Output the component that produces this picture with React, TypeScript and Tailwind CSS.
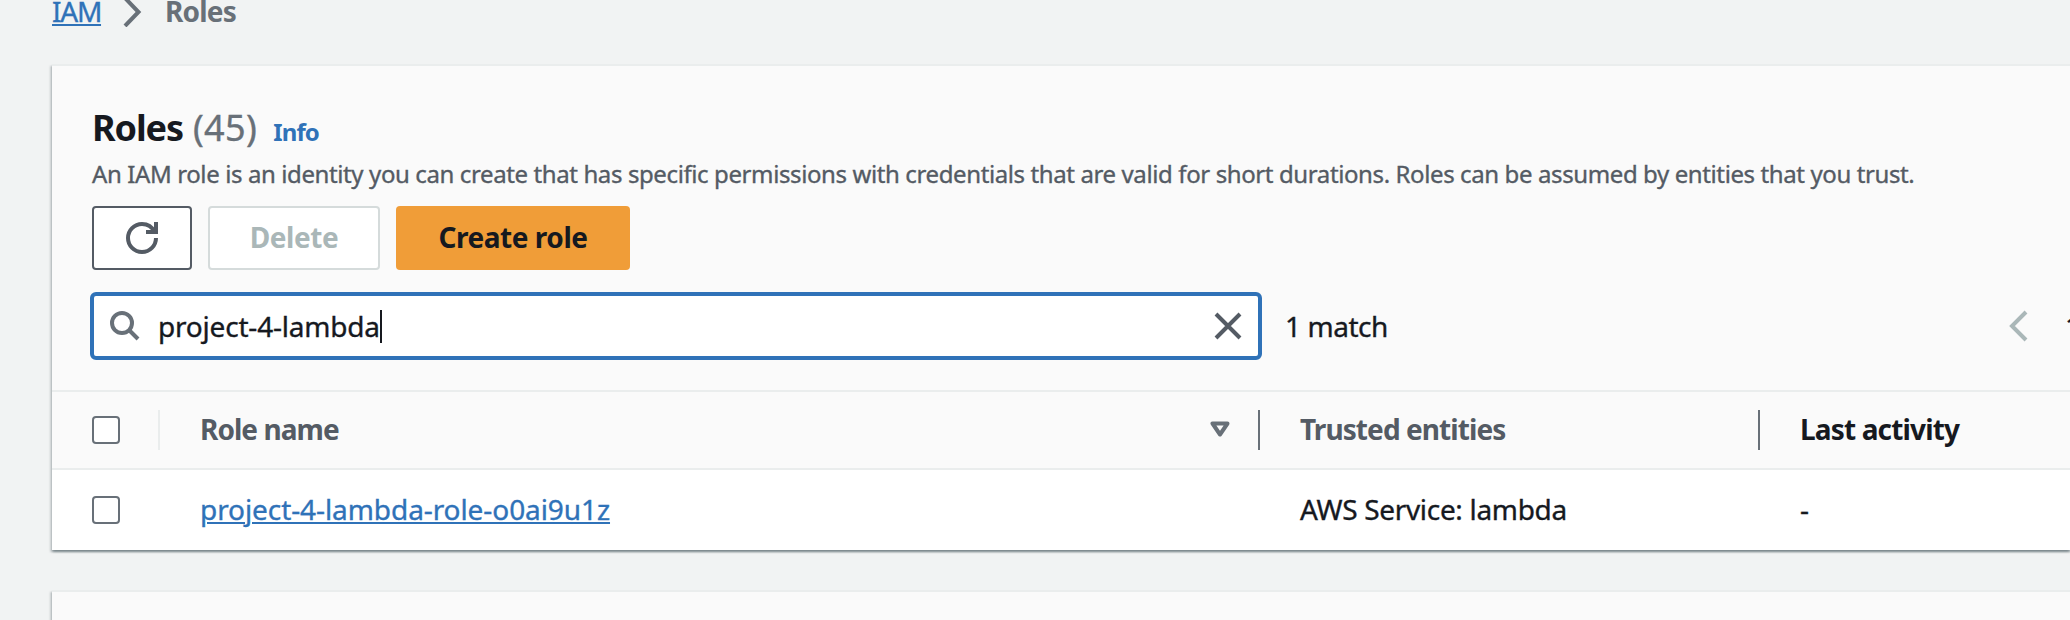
import type { ReactNode } from "react";

const cardShadow =
  "shadow-[0_2px_2px_0_rgba(0,28,36,0.3),2px_2px_2px_0_rgba(0,28,36,0.15),-2px_2px_2px_0_rgba(0,28,36,0.15)]";

const medium = "[-webkit-text-stroke:0.35px_currentColor]";

function Breadcrumbs() {
  return (
    <nav className="flex h-[22px] items-center pl-[52px] text-[28px] leading-[22px]">
      <a className={"tracking-[-1.25px] text-[#2f72b8] underline decoration-2 underline-offset-[2px] " + medium}>IAM</a>
      <svg className="ml-[20px] h-[32px] w-[24px] shrink-0" viewBox="0 0 24 32" fill="none">
        <path d="M4 3 L17.5 17 L4 31" stroke="#687078" strokeWidth="4" />
      </svg>
      <span className="ml-[20px] font-bold tracking-[-0.8px] text-[#687078]">Roles</span>
    </nav>
  );
}

function Checkbox() {
  return <span className="box-border h-[28px] w-[28px] shrink-0 rounded-[4px] border-2 border-[#687078] bg-white" />;
}

function HeaderCell({ children, className }: { children: ReactNode; className: string }) {
  return <div className={"flex h-[40px] items-center pb-[2px] font-bold " + className}>{children}</div>;
}

function Header() {
  return (
    <header className="flex h-[326px] flex-col overflow-hidden bg-[#fafafa] pl-[38px] pt-[42px]">
      <div className="ml-[2px] flex h-[40px] items-baseline leading-[40px]">
        <h1 className="text-[36px] font-bold tracking-[-1.1px]">Roles</h1>
        <span className={"ml-[10px] text-[36px] tracking-[0.4px] text-[#687078] " + medium}>(45)</span>
        <a className="ml-[16px] text-[24px] font-bold tracking-[-0.9px] text-[#2f72b8]">Info</a>
      </div>
      <p className={"ml-[2px] mt-[10px] h-[32px] whitespace-nowrap text-[24px] leading-[32px] tracking-[-0.39px] text-[#545b64] " + medium}>
        An IAM role is an identity you can create that has specific permissions with credentials that are valid for short durations. Roles can be assumed by entities that you trust.
      </p>
      <div className="ml-[2px] mt-[16px] flex gap-[16px] text-[28px] font-bold">
        <button className="flex h-[64px] w-[100px] items-center justify-center rounded-[4px] border-2 border-[#545b64] bg-white">
          <svg className="h-[32px] w-[32px]" viewBox="0 0 16 16" fill="none" stroke="#545b64" strokeWidth="2">
            <path d="M15 8c0 3.87-3.13 7-7 7s-7-3.13-7-7 3.13-7 7-7c2.8 0 5.1 1.5 6.3 4" />
            <path d="M10 5h5V0" />
          </svg>
        </button>
        <button className="flex h-[64px] w-[172px] items-center justify-center rounded-[4px] border-2 border-[#d5dbdb] bg-white pb-[2px] tracking-[-0.4px] text-[#aab7b8]">
          Delete
        </button>
        <button className="flex h-[64px] w-[234px] items-center justify-center rounded-[4px] bg-[#f09d38] pb-[2px] tracking-[-0.45px]">
          Create role
        </button>
      </div>
      <div className={"mt-[22px] flex h-[68px] items-center " + medium}>
        <div className="flex h-[68px] w-[1172px] shrink-0 items-center rounded-[6px] border-4 border-[#2f72b8] bg-white pl-[16px] pr-[16px]">
          <svg className="h-[30px] w-[30px]" viewBox="0 0 30 30" fill="none" stroke="#687078" strokeWidth="4">
            <circle cx="12" cy="12" r="10" />
            <path d="M19 19 L28 28" />
          </svg>
          <span className="ml-[18px] tracking-[-0.2px]">project-4-lambda</span>
          <span className="h-[33px] w-[2px] bg-[#16191f]" />
          <svg className="ml-auto h-[28px] w-[28px]" viewBox="0 0 28 28" fill="none" stroke="#545b64" strokeWidth="4">
            <path d="M2 2 L26 26 M26 2 L2 26" />
          </svg>
        </div>
        <div className="w-[746px] shrink-0 pl-[23px] tracking-[-0.45px]">1 match</div>
        <svg className="h-[32px] w-[20px] shrink-0" viewBox="0 0 20 32" fill="none">
          <path d="M18 2 L4 16 L18 30" stroke="#aab7b8" strokeWidth="4" />
        </svg>
        <span className="ml-[37px] shrink-0">1</span>
      </div>
    </header>
  );
}

const columns = "grid grid-cols-[108px_1100px_500px_1fr] items-center";

function Table() {
  return (
    <section>
      <div className={columns + " h-[80px] border-y-2 border-[#eaeded] bg-[#fafafa]"}>
        <div className="flex h-[40px] items-center border-r-2 border-[#eaeded] pl-[40px]">
          <Checkbox />
        </div>
        <HeaderCell className="border-r-2 border-[#687078] pl-[40px] pr-[28px] tracking-[-0.95px] text-[#545b64]">
          <span>Role name</span>
          <svg className="ml-auto h-[16px] w-[20px]" viewBox="0 0 20 16" fill="none">
            <path d="M2.5 2.5 H17.5 L10 13.5 Z" stroke="#687078" strokeWidth="4" strokeLinejoin="round" />
          </svg>
        </HeaderCell>
        <HeaderCell className="border-r-2 border-[#687078] pl-[40px] tracking-[-0.92px] text-[#545b64]">Trusted entities</HeaderCell>
        <HeaderCell className="pl-[40px] tracking-[-0.85px]">Last activity</HeaderCell>
      </div>
      <div className={columns + " h-[80px] bg-white " + medium}>
        <div className="flex items-center pl-[40px]">
          <Checkbox />
        </div>
        <a className="pb-[2px] pl-[40px] tracking-[-0.08px] text-[#2f72b8] underline decoration-2 underline-offset-[2px]">
          project-4-lambda-role-o0ai9u1z
        </a>
        <span className="pb-[2px] pl-[40px] tracking-[-0.32px]">AWS Service: lambda</span>
        <span className="pb-[2px] pl-[40px]">-</span>
      </div>
    </section>
  );
}

export default function App() {
  return (
    <main className="flex h-[620px] flex-col overflow-hidden bg-[#f1f3f3] font-['Noto_Sans',sans-serif] text-[28px] leading-[40px] text-[#16191f]">
      <Breadcrumbs />
      <div className={"ml-[52px] mt-[42px] h-[486px] shrink-0 whitespace-nowrap border-t-2 border-[#eaeded] " + cardShadow}>
        <div className="-mb-[2px]">
          <Header />
        </div>
        <Table />
      </div>
      <div className={"ml-[52px] mt-[40px] h-[60px] shrink-0 border-t-2 border-[#eaeded] bg-[#fafafa] " + cardShadow} />
    </main>
  );
}
